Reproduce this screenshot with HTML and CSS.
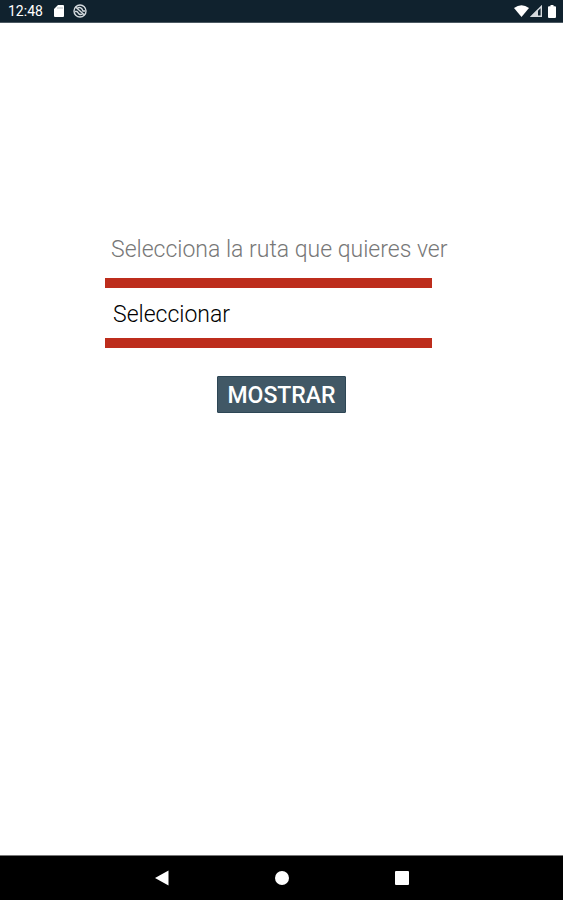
FILE: index.html
```html
<!DOCTYPE html>
<html lang="es">
<head>
<meta charset="utf-8">
<meta name="viewport" content="width=device-width, initial-scale=1">
<title>Rutas</title>
<link rel="stylesheet" href="styles.css">
</head>
<body>
<header class="status">
  <time class="clock">12:48</time>
  <svg class="sd" viewBox="0 0 10 12" aria-hidden="true"><path d="M4 0h5q1 0 1 1v10q0 1-1 1H1q-1 0-1-1V4z" fill="#fff"/><path d="M4 2v2M6 2v2M8 2v2" stroke="#8d989f" stroke-width=".7"/></svg>
  <svg class="sync" viewBox="0 0 14 14" aria-hidden="true"><g fill="none" stroke="#d5dade" stroke-width="1.4"><circle cx="7" cy="7" r="6"/><path d="M2.5 3l9 8M4.5 4.2Q7 2.6 9 5l1 2h2M2 7.500h2l2 2.500q2 1 3.500 0"/></g></svg>
  <span class="signals">
    <svg class="wifi" viewBox="0 0 15 12" aria-hidden="true"><path d="M0 3Q7.500-2.500 15 3L7.500 12z" fill="#fff"/></svg>
    <svg class="cell" viewBox="0 0 12 12" aria-hidden="true"><path d="M1.500 11.300L11.300 1.500v9.800z" fill="none" stroke="#d5dade" stroke-width="1.4"/><path d="M1 11.500L8 4.500v7z" fill="#d5dade"/></svg>
    <svg class="battery" viewBox="0 0 8 13" aria-hidden="true"><path d="M2.500 0h3v1.300H7q1 0 1 1V12q0 1-1 1H1q-1 0-1-1V2.300q0-1 1-1h1.500z" fill="#fff"/></svg>
  </span>
</header>
<main class="screen">
  <form class="picker">
    <label class="caption" for="ruta">Selecciona la ruta que quieres ver</label>
    <select class="route" id="ruta"><option>Seleccionar</option></select>
    <button class="show" type="button">MOSTRAR</button>
  </form>
</main>
<nav class="navbar">
  <button class="key" type="button" aria-label="Atrás"><svg viewBox="0 0 16 16"><path d="M1 8L14.500 .5v15z" fill="#fff"/></svg></button>
  <button class="key" type="button" aria-label="Inicio"><svg viewBox="0 0 16 16"><circle cx="8" cy="8" r="7" fill="#fff"/></svg></button>
  <button class="key" type="button" aria-label="Recientes"><svg viewBox="0 0 16 16"><rect x="1" y="1" width="14" height="14" rx="1" fill="#fff"/></svg></button>
</nav>
</body>
</html>
```
FILE: styles.css
```css
* { box-sizing: border-box; }
body {
  margin: 0;
  min-height: 100vh;
  display: flex;
  flex-direction: column;
  background: #fff;
  font-family: Roboto, "Liberation Sans", sans-serif;
}
svg { display: block; }
.status {
  display: flex;
  align-items: center;
  height: 23px;
  padding: 0 7px 0 8px;
  background: #10222e;
  border-bottom: 1px solid #4b5962;
  color: #fff;
}
.clock { font-size: 14px; line-height: 22px; }
.sd { width: 10px; height: 12px; margin-left: 11px; }
.sync { width: 14px; height: 14px; margin-left: 9px; }
.signals { display: flex; align-items: center; margin-left: auto; }
.wifi { width: 15px; height: 12px; }
.cell { width: 12px; height: 12px; margin-left: 1px; }
.battery { width: 8px; height: 13px; margin-left: 6px; }
.screen {
  flex: 1;
  display: flex;
  justify-content: center;
  align-items: flex-start;
  padding-top: 212px;
}
.picker { display: flex; flex-direction: column; width: 353px; }
.caption {
  padding: 1px 0 0 6px;
  font-size: 23px;
  font-weight: 300;
  line-height: 28px;
  color: #777;
  white-space: nowrap;
}
.route {
  appearance: none;
  height: 70px;
  margin: 14px 26px 0 0;
  padding: 2px 8px 0;
  border: solid #bd2d1c;
  border-width: 10px 0;
  border-radius: 0;
  background: #fff;
  color: #000;
  font: 300 23px Roboto, "Liberation Sans", sans-serif;
}
.show {
  align-self: center;
  height: 37px;
  margin-top: 28px;
  padding: 2px 9px 0;
  border: 1px solid #2d4655;
  border-radius: 1px;
  background: #415866;
  color: #fff;
  font: 500 23px Roboto, "Liberation Sans", sans-serif;
}
.navbar {
  display: flex;
  justify-content: center;
  gap: 80px;
  height: 45px;
  border-top: 1px solid #777;
  background: #000;
}
.key {
  display: grid;
  place-items: center;
  width: 40px;
  padding: 0;
  border: 0;
  background: none;
}
.key svg { width: 16px; height: 16px; }
```
